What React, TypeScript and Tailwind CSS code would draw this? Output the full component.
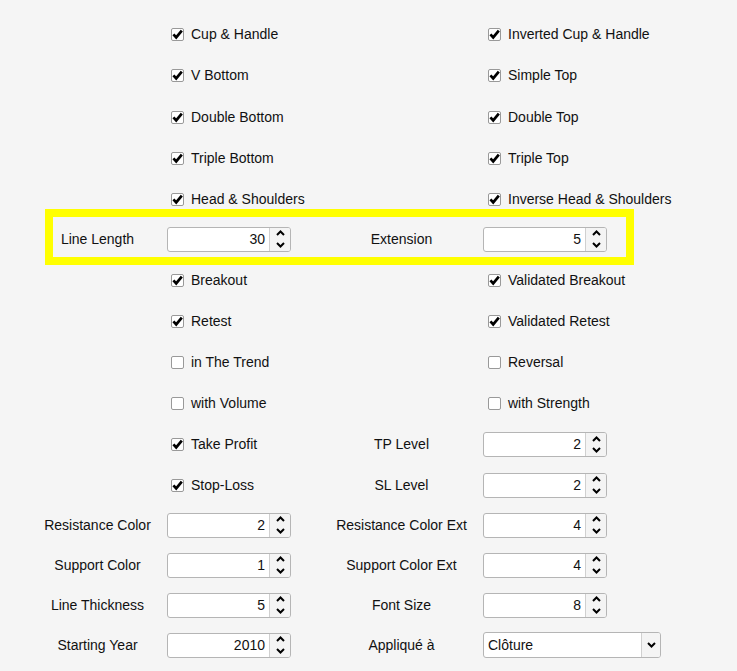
import React from 'react';

type Cell =
  | { kind: 'check'; label: string; checked: boolean }
  | { kind: 'spin'; label: string; value: string }
  | { kind: 'select'; label: string; value: string };

type Row = { h: string; left: Cell; right: Cell; highlight?: boolean };

const rows: Row[] = [
  { h: 'h-[41px]', left: { kind: 'check', label: 'Cup & Handle', checked: true }, right: { kind: 'check', label: 'Inverted Cup & Handle', checked: true } },
  { h: 'h-[41px]', left: { kind: 'check', label: 'V Bottom', checked: true }, right: { kind: 'check', label: 'Simple Top', checked: true } },
  { h: 'h-[42px]', left: { kind: 'check', label: 'Double Bottom', checked: true }, right: { kind: 'check', label: 'Double Top', checked: true } },
  { h: 'h-[41px]', left: { kind: 'check', label: 'Triple Bottom', checked: true }, right: { kind: 'check', label: 'Triple Top', checked: true } },
  { h: 'h-[40px]', left: { kind: 'check', label: 'Head & Shoulders', checked: true }, right: { kind: 'check', label: 'Inverse Head & Shoulders', checked: true } },
  { h: 'h-[40px]', left: { kind: 'spin', label: 'Line Length', value: '30' }, right: { kind: 'spin', label: 'Extension', value: '5' }, highlight: true },
  { h: 'h-[42px]', left: { kind: 'check', label: 'Breakout', checked: true }, right: { kind: 'check', label: 'Validated Breakout', checked: true } },
  { h: 'h-[41px]', left: { kind: 'check', label: 'Retest', checked: true }, right: { kind: 'check', label: 'Validated Retest', checked: true } },
  { h: 'h-[41px]', left: { kind: 'check', label: 'in The Trend', checked: false }, right: { kind: 'check', label: 'Reversal', checked: false } },
  { h: 'h-[41px]', left: { kind: 'check', label: 'with Volume', checked: false }, right: { kind: 'check', label: 'with Strength', checked: false } },
  { h: 'h-[41px]', left: { kind: 'check', label: 'Take Profit', checked: true }, right: { kind: 'spin', label: 'TP Level', value: '2' } },
  { h: 'h-[40px]', left: { kind: 'check', label: 'Stop-Loss', checked: true }, right: { kind: 'spin', label: 'SL Level', value: '2' } },
  { h: 'h-[40px]', left: { kind: 'spin', label: 'Resistance Color', value: '2' }, right: { kind: 'spin', label: 'Resistance Color Ext', value: '4' } },
  { h: 'h-[40px]', left: { kind: 'spin', label: 'Support Color', value: '1' }, right: { kind: 'spin', label: 'Support Color Ext', value: '4' } },
  { h: 'h-[40px]', left: { kind: 'spin', label: 'Line Thickness', value: '5' }, right: { kind: 'spin', label: 'Font Size', value: '8' } },
  { h: 'h-[40px]', left: { kind: 'spin', label: 'Starting Year', value: '2010' }, right: { kind: 'select', label: 'Appliqué à', value: 'Clôture' } },
];

function Checkbox({ checked }: { checked: boolean }) {
  return (
    <span className="w-[13px] h-[13px] shrink-0 rounded-[2px] border border-[#999] bg-white flex items-center justify-center">
      {checked && (
        <svg width="11" height="11" viewBox="0 0 11 11">
          <path d="M1.4 5.4 L4.2 8.4 L9.8 1.6" fill="none" stroke="#000" strokeWidth="2.7" />
        </svg>
      )}
    </span>
  );
}

function Chevron({ up }: { up?: boolean }) {
  return (
    <svg width="9" height="6" viewBox="0 0 9 6">
      <path d={up ? 'M1 5 L4.5 1.5 L8 5' : 'M1 1 L4.5 4.5 L8 1'} fill="none" stroke="#000" strokeWidth="2" />
    </svg>
  );
}

function SpinBox({ value }: { value: string }) {
  return (
    <div className="w-[124px] h-[25px] flex rounded-[3px] border border-[#b5b5b5] bg-white overflow-hidden">
      <div className="flex-1 flex items-center justify-end pr-[4px]">{value}</div>
      <div className="w-[21px] flex flex-col border-l border-[#d0d0d0] bg-[#f4f4f4]">
        <span className="flex-1 flex items-center justify-center">
          <Chevron up />
        </span>
        <span className="flex-1 flex items-center justify-center">
          <Chevron />
        </span>
      </div>
    </div>
  );
}

function Select({ value }: { value: string }) {
  return (
    <div className="w-[178px] h-[26px] flex rounded-[3px] border border-[#b5b5b5] bg-white overflow-hidden">
      <div className="flex-1 flex items-center pl-[4px]">{value}</div>
      <div className="w-[19px] flex items-center justify-center border-l border-[#d0d0d0] bg-[#f4f4f4]">
        <Chevron />
      </div>
    </div>
  );
}

function Cells({ cell, right }: { cell: Cell; right?: boolean }) {
  if (cell.kind === 'check') {
    return (
      <>
        <div />
        <div className={`flex items-center gap-[7px] whitespace-nowrap ${right ? 'pl-[21px]' : 'pl-[6px]'}`}>
          <Checkbox checked={cell.checked} />
          <span>{cell.label}</span>
        </div>
      </>
    );
  }
  return (
    <>
      <div className="flex items-center justify-center whitespace-nowrap">{cell.label}</div>
      <div className={`flex items-center ${right ? 'pl-[16px]' : 'pl-[2px]'}`}>
        {cell.kind === 'spin' ? <SpinBox value={cell.value} /> : <Select value={cell.value} />}
      </div>
    </>
  );
}

export default function App() {
  return (
    <div
      className="w-[737px] h-[671px] overflow-hidden bg-[#f5f5f5] text-[14px] text-[#111] pt-[14px]"
      style={{ fontFamily: '"Liberation Sans", Arial, sans-serif' }}
    >
      {rows.map((row, i) => (
        <div key={i} className={`relative grid grid-cols-[135px_171px_131px_1fr] pl-[30px] ${row.h}`}>
          <Cells cell={row.left} />
          <Cells cell={row.right} right />
          {row.highlight && (
            <span className="absolute left-[45px] top-[-10px] w-[589px] h-[56px] border-8 border-[#ffff00] pointer-events-none" />
          )}
        </div>
      ))}
    </div>
  );
}
